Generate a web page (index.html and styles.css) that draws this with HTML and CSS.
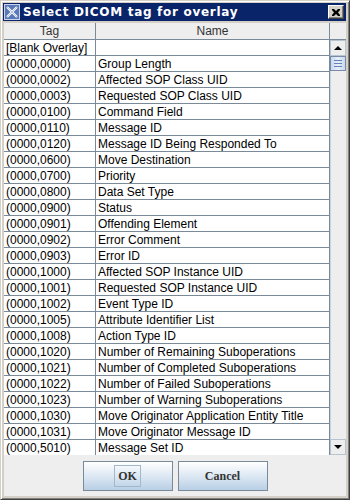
FILE: index.html
```html
<!DOCTYPE html>
<html lang="en">
<head>
  <meta charset="UTF-8" />
  <title>Select DICOM tag for overlay</title>
  <link rel="stylesheet" href="styles.css">
</head>
<body>

  <div class="window">
    <div class="titlebar">
      <svg class="app-icon" width="16" height="16" viewBox="0 0 16 16">
        <rect x="0.5" y="0.5" width="15" height="15" fill="#5a78b8" stroke="#c8d4ec"/>
        <path d="M3 3 L13 13 M13 3 L3 13" stroke="#ffffff" stroke-width="2.2"/>
        <path d="M3 3 L13 13 M13 3 L3 13" stroke="#9fb4e0" stroke-width="0.8"/>
      </svg>
      <span class="title">Select DICOM tag for overlay</span>
      <div class="close-btn">
        <svg width="8" height="7" viewBox="0 0 8 7">
          <path d="M0 0h2l2 2 2-2h2v1l-2 2.5 2 2.5v1h-2l-2-2-2 2h-2v-1l2-2.5-2-2.5z" fill="#000"/>
        </svg>
      </div>
    </div>

    <div class="content">
      <div class="pane">
        <div class="head">
          <div class="head-cell tag-col">Tag</div>
          <div class="head-cell name-col">Name</div>
          <div class="head-corner"></div>
        </div>
        <div class="body">
          <div class="rows" id="rows"></div>
          <div class="scrollbar">
            <div class="scroll-btn"><span class="arrow up"></span></div>
            <div class="track">
              <div class="thumb">
                <span class="grip"></span>
                <span class="grip"></span>
                <span class="grip"></span>
              </div>
            </div>
            <div class="scroll-btn"><span class="arrow down"></span></div>
          </div>
        </div>
      </div>

      <div class="buttons">
        <button class="btn"><span class="focus">OK</span></button>
        <button class="btn">Cancel</button>
      </div>
    </div>
  </div>

  <script>
    const tags = [
      ["[Blank Overlay]", ""],
      ["(0000,0000)", "Group Length"],
      ["(0000,0002)", "Affected SOP Class UID"],
      ["(0000,0003)", "Requested SOP Class UID"],
      ["(0000,0100)", "Command Field"],
      ["(0000,0110)", "Message ID"],
      ["(0000,0120)", "Message ID Being Responded To"],
      ["(0000,0600)", "Move Destination"],
      ["(0000,0700)", "Priority"],
      ["(0000,0800)", "Data Set Type"],
      ["(0000,0900)", "Status"],
      ["(0000,0901)", "Offending Element"],
      ["(0000,0902)", "Error Comment"],
      ["(0000,0903)", "Error ID"],
      ["(0000,1000)", "Affected SOP Instance UID"],
      ["(0000,1001)", "Requested SOP Instance UID"],
      ["(0000,1002)", "Event Type ID"],
      ["(0000,1005)", "Attribute Identifier List"],
      ["(0000,1008)", "Action Type ID"],
      ["(0000,1020)", "Number of Remaining Suboperations"],
      ["(0000,1021)", "Number of Completed Suboperations"],
      ["(0000,1022)", "Number of Failed Suboperations"],
      ["(0000,1023)", "Number of Warning Suboperations"],
      ["(0000,1030)", "Move Originator Application Entity Title"],
      ["(0000,1031)", "Move Originator Message ID"],
      ["(0000,5010)", "Message Set ID"]
    ];

    const rows = document.getElementById("rows");

    // Build the table rows
    tags.forEach(([tag, name]) => {
      const row = document.createElement("div");
      row.className = "row";
      const tagCell = document.createElement("div");
      tagCell.className = "cell tag-col";
      tagCell.textContent = tag;
      const nameCell = document.createElement("div");
      nameCell.className = "cell name-col";
      nameCell.textContent = name;
      row.appendChild(tagCell);
      row.appendChild(nameCell);
      rows.appendChild(row);
    });
  </script>

</body>
</html>
```

FILE: styles.css
```css
html, body {
  margin: 0;
  padding: 0;
  background: #d4d0c8;
}

.window {
  width: 350px;
  height: 500px;
  box-sizing: border-box;
  border: 1px solid;
  border-color: #d4d0c8 #404040 #404040 #d4d0c8;
  box-shadow: inset 1px 1px #ffffff, inset -1px -1px #808080;
  padding: 2px 3px 3px 2px;
  background: #d4d0c8;
  display: flex;
  flex-direction: column;
}

/* Title bar */
.titlebar {
  height: 18px;
  background: #0a246a;
  display: flex;
  align-items: center;
  padding: 0 2px 0 1px;
}

.app-icon {
  flex-shrink: 0;
}

.title {
  margin-left: 3px;
  color: #ffffff;
  font-family: "DejaVu Sans", sans-serif;
  font-weight: bold;
  font-size: 12px;
  letter-spacing: 0.7px;
  white-space: nowrap;
}

.close-btn {
  margin-left: auto;
  width: 16px;
  height: 14px;
  box-sizing: border-box;
  background: #d4d0c8;
  border: 1px solid;
  border-color: #ffffff #404040 #404040 #ffffff;
  box-shadow: inset -1px -1px #808080;
  display: flex;
  align-items: center;
  justify-content: center;
}

/* Main content */
.content {
  flex: 1;
  margin: 2px 0 0 1px;
  background: #eeeeee;
  display: flex;
  flex-direction: column;
}

.pane {
  height: 432px;
  display: flex;
  flex-direction: column;
  font-family: "Liberation Sans", Arial, sans-serif;
  font-size: 12px;
  color: #000000;
}

.head {
  display: flex;
  height: 17px;
  box-sizing: border-box;
  border-bottom: 1px solid #7a8a99;
  background: #eeeeee;
}

.head-cell {
  box-sizing: border-box;
  border-right: 1px solid #7a8a99;
  text-align: center;
  line-height: 16px;
  color: #333333;
}

.head-corner {
  flex: 1;
  background: #eeeeee;
}

.tag-col {
  width: 92px;
}

.name-col {
  width: 234px;
}

.body {
  flex: 1;
  display: flex;
  min-height: 0;
}

.rows {
  width: 326px;
  overflow: hidden;
  background: #ffffff;
}

.row {
  display: flex;
  height: 16px;
  box-sizing: border-box;
  border-bottom: 1px solid #7a8a99;
}

.cell {
  box-sizing: border-box;
  border-right: 1px solid #7a8a99;
  padding: 1px 0 0 2px;
  line-height: 14px;
  white-space: nowrap;
  overflow: hidden;
}

/* Scrollbar */
.scrollbar {
  width: 16px;
  display: flex;
  flex-direction: column;
  background: #eeeeee;
}

.scroll-btn {
  height: 16px;
  box-sizing: border-box;
  border: 1px solid #b8c4d0;
  background: #eeeeee;
  display: flex;
  align-items: center;
  justify-content: center;
}

.arrow {
  width: 0;
  height: 0;
  border-left: 4px solid transparent;
  border-right: 4px solid transparent;
}

.arrow.up {
  border-bottom: 4px solid #000000;
}

.arrow.down {
  border-top: 4px solid #000000;
}

.track {
  flex: 1;
  border-left: 1px solid #c5d4e3;
}

.thumb {
  height: 15px;
  margin-left: -1px;
  box-sizing: border-box;
  border: 1px solid #7a8aa9;
  background: linear-gradient(to right, #c8d8ee, #e8f0fa 50%, #c8d8ee);
  display: flex;
  flex-direction: column;
  justify-content: center;
  align-items: center;
  gap: 2px;
}

.grip {
  width: 8px;
  height: 1px;
  background: #6382bf;
}

/* Buttons */
.buttons {
  flex: 1;
  display: flex;
  justify-content: center;
  align-items: flex-start;
  gap: 5px;
  padding-top: 6px;
}

.btn {
  width: 90px;
  height: 30px;
  border: 1px solid #7a8a99;
  background: linear-gradient(to bottom, #ffffff, #dde8f3 50%, #b8cfe5);
  font-family: "Liberation Serif", "Times New Roman", serif;
  font-weight: bold;
  font-size: 12px;
  color: #333333;
  padding: 0;
}

.focus {
  border: 1px solid #a3b8cc;
  padding: 3px 3px;
}
```
